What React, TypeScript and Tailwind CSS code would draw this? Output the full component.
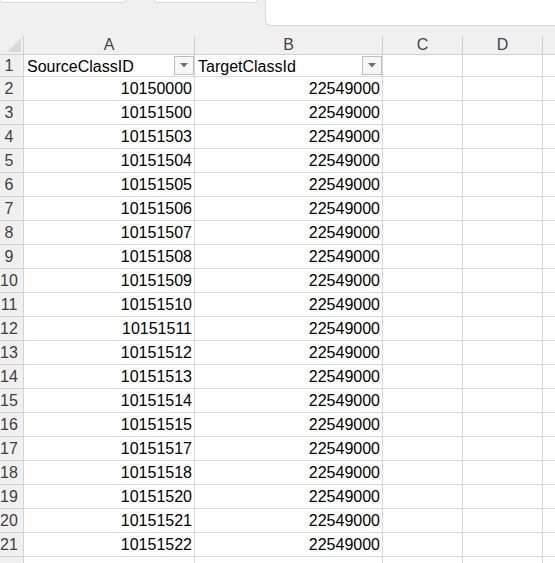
import React from "react";

const rows: [number, string, string][] = [
  [2, "10150000", "22549000"],
  [3, "10151500", "22549000"],
  [4, "10151503", "22549000"],
  [5, "10151504", "22549000"],
  [6, "10151505", "22549000"],
  [7, "10151506", "22549000"],
  [8, "10151507", "22549000"],
  [9, "10151508", "22549000"],
  [10, "10151509", "22549000"],
  [11, "10151510", "22549000"],
  [12, "10151511", "22549000"],
  [13, "10151512", "22549000"],
  [14, "10151513", "22549000"],
  [15, "10151514", "22549000"],
  [16, "10151515", "22549000"],
  [17, "10151517", "22549000"],
  [18, "10151518", "22549000"],
  [19, "10151520", "22549000"],
  [20, "10151521", "22549000"],
  [21, "10151522", "22549000"],
];

function FilterButton() {
  return (
    <div className="w-[20px] h-[19px] shrink-0 border border-[#bfbfbf] bg-[#f6f6f6] flex items-center justify-center">
      <svg width="8" height="5" viewBox="0 0 8 5">
        <path d="M0 0 L8 0 L4 4.5 Z" fill="#707070" />
      </svg>
    </div>
  );
}

function RowHead({ n, h }: { n: number | string; h: string }) {
  return (
    <div
      className={`w-[24px] shrink-0 ${h} border-r border-b border-[#d2d2d2] bg-[#f0f0f0] text-[#3f3f3f] text-[16px] flex items-center justify-center pr-[5px] pt-[1px]`}
    >
      {n}
    </div>
  );
}

export default function App() {
  return (
    <div
      className="w-[555px] h-[563px] overflow-hidden bg-[#f0f0f0] text-black"
      style={{ fontFamily: '"Liberation Sans", Arial, sans-serif' }}
    >
      {/* top ribbon fragment */}
      <div className="flex items-start h-[26px]">
        <div className="w-[126px] h-[3px] bg-white border-x border-b border-[#d9d9d9] rounded-b-[4px]" />
        <div className="ml-[28px] w-[104px] h-[3px] bg-white border-x border-b border-[#d9d9d9] rounded-b-[4px]" />
        <div className="ml-[7px] flex-1 h-[26px] bg-white border-l border-b border-[#d6d6d6] rounded-bl-[6px]" />
      </div>
      <div className="h-[10px]" />

      {/* column headers */}
      <div className="flex h-[19px] text-[16px] text-[#444]">
        <div className="w-[24px] shrink-0 h-[19px] border-r border-b border-[#cfcfcf] flex items-end justify-end pr-[2px] pb-[2px]">
          <svg width="14" height="14" viewBox="0 0 14 14">
            <path d="M14 0 L14 14 L0 14 Z" fill="#d9d9d9" />
          </svg>
        </div>
        <div className="w-[171px] shrink-0 border-r border-b border-[#cfcfcf] flex items-center justify-center leading-none">A</div>
        <div className="w-[188px] shrink-0 border-r border-b border-[#cfcfcf] flex items-center justify-center leading-none">B</div>
        <div className="w-[80px] shrink-0 border-r border-b border-[#cfcfcf] flex items-center justify-center leading-none">C</div>
        <div className="w-[80px] shrink-0 border-r border-b border-[#cfcfcf] flex items-center justify-center leading-none">D</div>
        <div className="flex-1 border-b border-[#cfcfcf]" />
      </div>

      {/* row 1 */}
      <div className="flex h-[22px] text-[16px]">
        <RowHead n={1} h="h-[22px]" />
        <div className="w-[171px] shrink-0 bg-white border-r border-b border-[#dadada] flex items-center justify-between pl-[3px]">
          <span className="pt-[2px]">SourceClassID</span>
          <FilterButton />
        </div>
        <div className="w-[188px] shrink-0 bg-white border-r border-b border-[#dadada] flex items-center justify-between pl-[3px]">
          <span className="pt-[2px]">TargetClassId</span>
          <FilterButton />
        </div>
        <div className="w-[80px] shrink-0 bg-white border-r border-b border-[#dadada]" />
        <div className="w-[80px] shrink-0 bg-white border-r border-b border-[#dadada]" />
        <div className="flex-1 bg-white border-b border-[#dadada]" />
      </div>

      {rows.map(([n, a, b]) => (
        <div key={n} className="flex h-[24px] text-[16px]">
          <RowHead n={n} h="h-[24px]" />
          <div className="w-[171px] shrink-0 bg-white border-r border-b border-[#dadada] flex items-center justify-end pr-[2px] pt-[1px]">
            {a}
          </div>
          <div className="w-[188px] shrink-0 bg-white border-r border-b border-[#dadada] flex items-center justify-end pr-[2px] pt-[1px]">
            {b}
          </div>
          <div className="w-[80px] shrink-0 bg-white border-r border-b border-[#dadada]" />
          <div className="w-[80px] shrink-0 bg-white border-r border-b border-[#dadada]" />
          <div className="flex-1 bg-white border-b border-[#dadada]" />
        </div>
      ))}

      <div className="flex h-[24px] text-[16px]">
        <div className="w-[24px] shrink-0 h-[24px] border-r border-[#d2d2d2] bg-[#f0f0f0]" />
        <div className="w-[171px] shrink-0 bg-white border-r border-[#dadada]" />
        <div className="w-[188px] shrink-0 bg-white border-r border-[#dadada]" />
        <div className="w-[80px] shrink-0 bg-white border-r border-[#dadada]" />
        <div className="w-[80px] shrink-0 bg-white border-r border-[#dadada]" />
        <div className="flex-1 bg-white" />
      </div>
    </div>
  );
}
